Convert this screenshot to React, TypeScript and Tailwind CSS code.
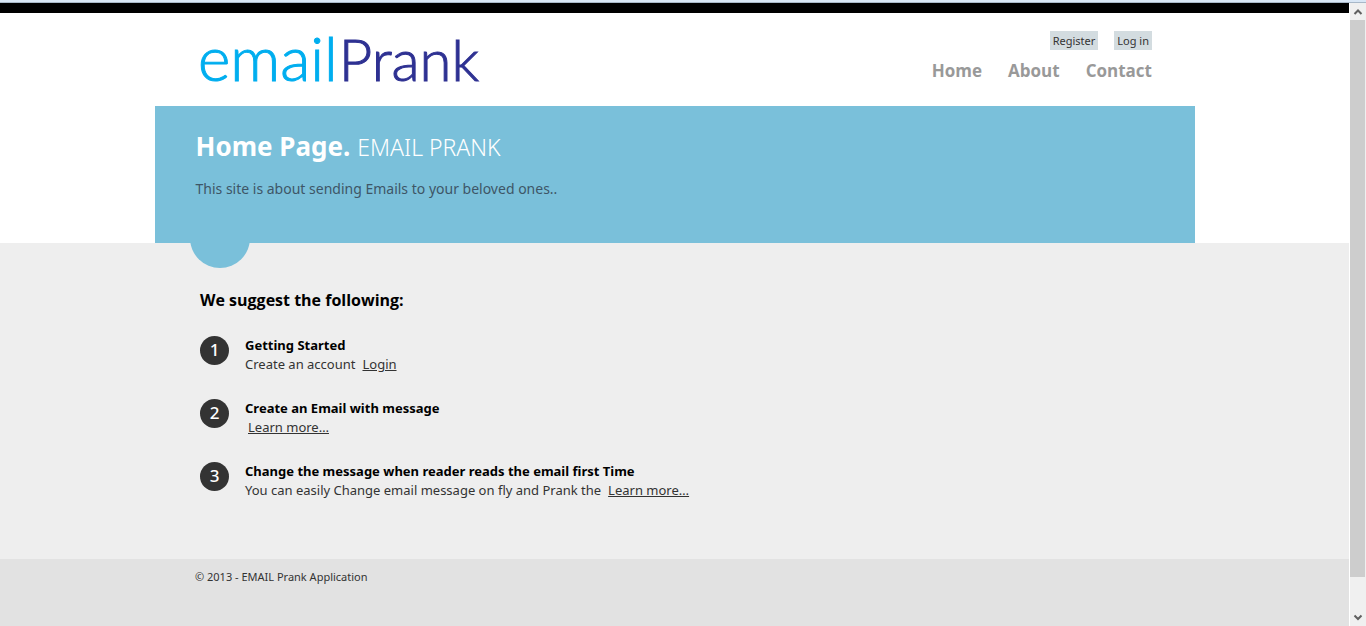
import React from 'react';

type Step = { title: string; text?: string; link: string };

const steps: Step[] = [
  { title: 'Getting Started', text: 'Create an account', link: 'Login' },
  { title: 'Create an Email with message', link: 'Learn more…' },
  {
    title: 'Change the message when reader reads the email first Time',
    text: 'You can easily Change email message on fly and Prank the',
    link: 'Learn more…',
  },
];

function Logo() {
  return (
    <a
      href="#home"
      className="flex items-baseline gap-px pl-[3px] font-['Lato',sans-serif] leading-[72px] font-light"
    >
      <span className="text-[62px] text-[#00aeef] [-webkit-text-stroke:1px_#00aeef]">email</span>
      <span className="text-[58px] text-[#2e3192] [-webkit-text-stroke:1px_#2e3192]">Prank</span>
    </a>
  );
}

function Header() {
  return (
    <header className="mx-auto flex h-[93px] w-full max-w-[959px] items-start justify-between pt-2">
      <Logo />
      <div className="flex flex-col items-end pt-[10px] pr-[2px]">
        <div className="flex gap-4 text-[11px] leading-[19px] text-[#333]">
          <a href="#register" className="bg-[#d3dce0] px-[3px]">Register</a>
          <a href="#login" className="bg-[#d3dce0] px-[3px]">Log in</a>
        </div>
        <nav className="mt-[7px] flex gap-[26px] font-['Open_Sans',sans-serif] text-[17px] leading-7 font-bold text-[#999]">
          <a href="#home">Home</a>
          <a href="#about">About</a>
          <a href="#contact">Contact</a>
        </nav>
      </div>
    </header>
  );
}

function Banner() {
  return (
    <section className="relative mx-auto h-[137px] w-full max-w-[1040px] bg-[#7ac0da] px-[41px] pt-[19px]">
      <div className="flex items-baseline gap-[7px] leading-[42px] text-white">
        <h1 className="text-[26px] font-bold">Home Page.</h1>
        <h2 className="text-[23px] font-light">EMAIL PRANK</h2>
      </div>
      <p className="mt-[9px] text-[14px] leading-6 text-[#3e5667]">
        This site is about sending Emails to your beloved ones..
      </p>
      <div className="absolute top-full left-[35px] h-[25px] w-[60px] overflow-hidden">
        <div className="-mt-[35px] size-[60px] rounded-full bg-[#7ac0da]" />
      </div>
    </section>
  );
}

function Steps() {
  return (
    <main className="h-[316px] bg-[#eee]">
      <div className="mx-auto w-full max-w-[959px] px-[5px] pt-[45px]">
        <h3 className="font-['Open_Sans',sans-serif] text-[16px] leading-6 font-bold text-black">
          We suggest the following:
        </h3>
        <ol className="mt-6 flex flex-col gap-[25px]">
          {steps.map((step, index) => (
            <li key={step.title} className="flex gap-4">
              <span className="flex size-[29px] shrink-0 items-center justify-center rounded-full bg-[#333] pb-[2px] text-[17px] leading-none font-medium text-white">
                {index + 1}
              </span>
              <div className="text-[13px] leading-[19px] text-[#333]">
                <h5 className="font-bold text-black">{step.title}</h5>
                <p>
                  {step.text}
                  <a href="#more" className={step.text ? 'ml-[7px] underline' : 'ml-[3px] underline'}>
                    {step.link}
                  </a>
                </p>
              </div>
            </li>
          ))}
        </ol>
      </div>
    </main>
  );
}

function Scrollbar() {
  return (
    <div aria-hidden="true" className="flex w-[17px] shrink-0 flex-col border-l border-white bg-[#f0f0f0]">
      <svg viewBox="0 0 16 17" className="h-[17px] w-4">
        <path d="M4.5 11 8 7.5 11.500 11" fill="none" stroke="#606060" strokeWidth="2" />
      </svg>
      <div className="h-[557px] w-[15px] bg-[#cdcdcd]" />
      <div className="flex-1" />
      <svg viewBox="0 0 16 17" className="h-[17px] w-4">
        <path d="M4.500 6.500 8 10 11.500 6.500" fill="none" stroke="#606060" strokeWidth="2" />
      </svg>
    </div>
  );
}

export default function App() {
  return (
    <div className="flex min-h-screen flex-col bg-white font-['Noto_Sans','Open_Sans',sans-serif]">
      <div className="h-[3px] border-b border-[#a8b8c8] bg-[#d9e7f6]" />
      <div className="flex flex-1">
        <div className="flex min-w-0 flex-1 flex-col">
          <div className="h-[10px] bg-black" />
          <Header />
          <Banner />
          <Steps />
          <footer className="flex-1 bg-[#e2e2e2]">
            <p className="mx-auto w-full max-w-[959px] pt-2 text-[11px] leading-5 text-[#333]">
              © 2013 - EMAIL Prank Application
            </p>
          </footer>
        </div>
        <Scrollbar />
      </div>
    </div>
  );
}
